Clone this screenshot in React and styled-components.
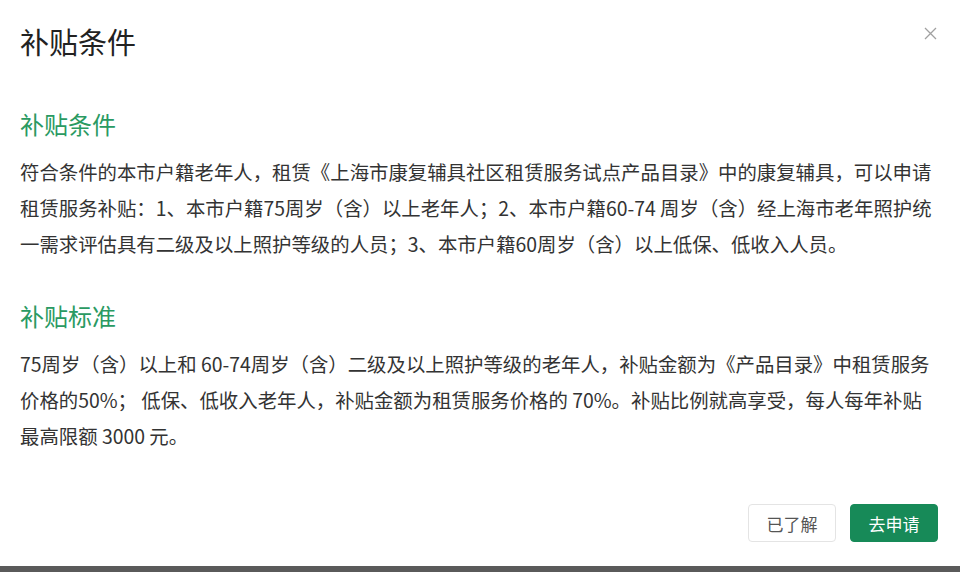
import React from "react";
import styled, { createGlobalStyle } from "styled-components";

const Global = createGlobalStyle`
  html, body { margin: 0; padding: 0; background: #5a5a5a; }
  body { font-family: "Noto Sans CJK SC", "Noto Sans", sans-serif; }
  * { box-sizing: border-box; }
`;

const Modal = styled.div`
  width: 960px;
  height: 566px;
  background: #fff;
  display: flex;
  flex-direction: column;
  padding: 0 20px 0 20px;
`;

const Header = styled.div`
  display: flex;
  align-items: center;
  justify-content: space-between;
  height: 82px;
`;

const Title = styled.h1`
  margin: 0;
  font-size: 29px;
  font-weight: 400;
  color: #222;
  line-height: 1;
`;

const Close = styled.button`
  align-self: flex-start;
  margin-top: 25px;
  border: 0;
  background: none;
  padding: 0;
  width: 16px;
  height: 16px;
  margin-right: 2px;
  display: flex;
  align-items: center;
  justify-content: center;
  cursor: pointer;
`;

const Body = styled.div`
  flex: 1;
  display: flex;
  flex-direction: column;
`;

const SectionTitle = styled.h2`
  margin: 22px 0 0;
  font-size: 24px;
  font-weight: 400;
  color: #2a9a62;
  line-height: 40px;
`;

const Para = styled.p`
  margin: 10px 0 12px;
  font-size: 19.4px;
  line-height: 36px;
  color: #333;
  width: 916px;
`;

const Footer = styled.div`
  display: flex;
  justify-content: flex-end;
  gap: 14px;
  padding: 0 2px 24px 0;
`;

const Button = styled.button`
  width: 88px;
  height: 38px;
  border-radius: 4px;
  font-family: inherit;
  font-size: 17px;
  cursor: pointer;
  border: 1px solid ${(p) => (p.$primary ? "#178a58" : "#e4e4e4")};
  background: ${(p) => (p.$primary ? "#178a58" : "#fff")};
  color: ${(p) => (p.$primary ? "#fff" : "#555")};
`;

export default function App() {
  return (
    <>
      <Global />
      <Modal>
        <Header>
          <Title>补贴条件</Title>
          <Close aria-label="关闭">
            <svg width="13" height="13" viewBox="0 0 13 13">
              <path d="M1 1L12 12M12 1L1 12" stroke="#a0a0a0" strokeWidth="1.3" />
            </svg>
          </Close>
        </Header>
        <Body>
          <SectionTitle>补贴条件</SectionTitle>
          <Para>
            符合条件的本市户籍老年人，租赁《上海市康复辅具社区租赁服务试点产品目录》中的康复辅具，可以申请租赁服务补贴：1、本市户籍75周岁（含）以上老年人；2、本市户籍60-74 周岁（含）经上海市老年照护统一需求评估具有二级及以上照护等级的人员；3、本市户籍60周岁（含）以上低保、低收入人员。
          </Para>
          <SectionTitle>补贴标准</SectionTitle>
          <Para>
            75周岁（含）以上和 60-74周岁（含）二级及以上照护等级的老年人，补贴金额为《产品目录》中租赁服务价格的50%； 低保、低收入老年人，补贴金额为租赁服务价格的 70%。补贴比例就高享受，每人每年补贴最高限额 3000 元。
          </Para>
        </Body>
        <Footer>
          <Button>已了解</Button>
          <Button $primary>去申请</Button>
        </Footer>
      </Modal>
    </>
  );
}
